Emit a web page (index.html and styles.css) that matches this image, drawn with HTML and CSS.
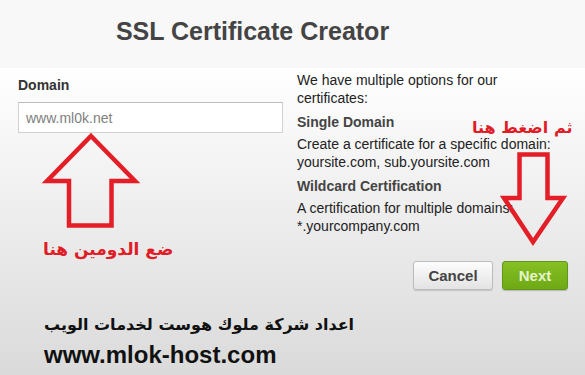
FILE: index.html
```html
<!DOCTYPE html>
<html>
	<head>
		<meta charset="utf-8">
		<title>SSL Certificate Creator</title>
		<link rel="stylesheet" href="styles.css">
	</head>
	<body>
		<div id="page">
			<div class="header">
				<h1>SSL Certificate Creator</h1>
			</div>
			<div class="content">
				<div class="columns">
					<div class="field">
						<label for="domain">Domain</label>
						<input id="domain" type="text" placeholder="www.ml0k.net">
					</div>
					<div class="info">
						<p>We have multiple options for our certificates:</p>
						<h4>Single Domain</h4>
						<p>Create a certificate for a specific domain: yoursite.com, sub.yoursite.com</p>
						<h4>Wildcard Certification</h4>
						<p>A certification for multiple domains: *.yourcompany.com</p>
					</div>
				</div>
				<div class="actions">
					<button class="btn cancel">Cancel</button>
					<button class="btn next">Next</button>
				</div>
				<div class="credit">
					<div class="credit-ar" dir="rtl">اعداد شركة ملوك هوست لخدمات الويب</div>
					<div class="credit-url">www.mlok-host.com</div>
				</div>
			</div>

			<!-- annotations drawn over the screenshot -->
			<svg class="arrow arrow-up" width="104" height="104" viewBox="0 0 104 104">
				<polygon points="51,8 95,53 71.5,53 71.5,97.5 29,97.5 29,53 7,53"/>
			</svg>
			<svg class="arrow arrow-down" width="70" height="98" viewBox="0 0 70 98">
				<polygon points="21.5,4.5 49.5,4.5 49.5,48 65,48 35,92 6,48 21.5,48"/>
			</svg>
			<div class="note note-domain" dir="rtl">ضع الدومين هنا</div>
			<div class="note note-next" dir="rtl">ثم اضغط هنا</div>
		</div>
	</body>
</html>
```

FILE: styles.css
```css
html, body {margin:0;padding:0;}
body {font-family:"Liberation Sans", Arial, sans-serif;color:#222;background:#fff;}
#page {position:relative;width:585px;height:375px;overflow:hidden;display:flex;flex-direction:column;}

.header {height:68px;box-sizing:border-box;padding:0 80px 6px 0;background:#f8f8f9;display:flex;align-items:center;justify-content:center;}
.header h1 {margin:0;font-size:25px;font-weight:bold;color:#444;}

.content {flex:1;background:linear-gradient(#ffffff, #dadada);}
.columns {display:flex;gap:14px;padding:1px 0 0 18px;}
.field {width:265px;}
.field label {display:block;margin-top:7px;font-size:14px;font-weight:bold;color:#333;line-height:18px;}
.field input {display:block;box-sizing:border-box;width:265px;height:31px;margin-top:8px;padding:0 7px;border:1px solid #d2d2d2;border-top-color:#bdbdbd;background:#fff;font-family:"Liberation Sans", Arial, sans-serif;font-size:14px;outline:none;}
.field input::placeholder {color:#808080;}

.info {width:262px;padding-top:2px;font-size:14px;line-height:18px;}
.info p {margin:0;}
.info h4 {margin:6px 0 4px 0;font-size:14px;color:#444;}

.actions {display:flex;justify-content:flex-end;gap:9px;padding-right:17px;margin-top:26px;}
.btn {height:29px;border-radius:3px;font-family:"Liberation Sans", Arial, sans-serif;font-size:15px;font-weight:bold;cursor:pointer;}
.cancel {width:80px;border:1px solid #bcbcbc;background:linear-gradient(#fdfdfd, #e3e3e3);color:#444;box-shadow:0 1px 1px rgba(0,0,0,0.15);}
.next {width:66px;border:1px solid #5f9816;background:linear-gradient(#86c024, #6ea815);color:#e5f4cc;box-shadow:0 1px 1px rgba(0,0,0,0.2);}

.credit {padding:20px 0 0 44px;font-weight:bold;color:#111;}
.credit-ar {font-family:"DejaVu Sans", sans-serif;font-size:16px;line-height:30px;text-align:left;}
.credit-url {font-size:24px;line-height:30px;}

.arrow {position:absolute;}
.arrow polygon {fill:none;stroke:#e31e26;stroke-width:4.5;stroke-linejoin:miter;}
.arrow-up {left:40px;top:128px;}
.arrow-down {left:498px;top:150px;}

.note {position:absolute;font-family:"DejaVu Sans", sans-serif;font-weight:bold;font-size:17px;color:#e01c26;line-height:22px;}
.note-domain {left:43px;top:238px;}
.note-next {left:472px;top:117px;font-size:16px;}
```
